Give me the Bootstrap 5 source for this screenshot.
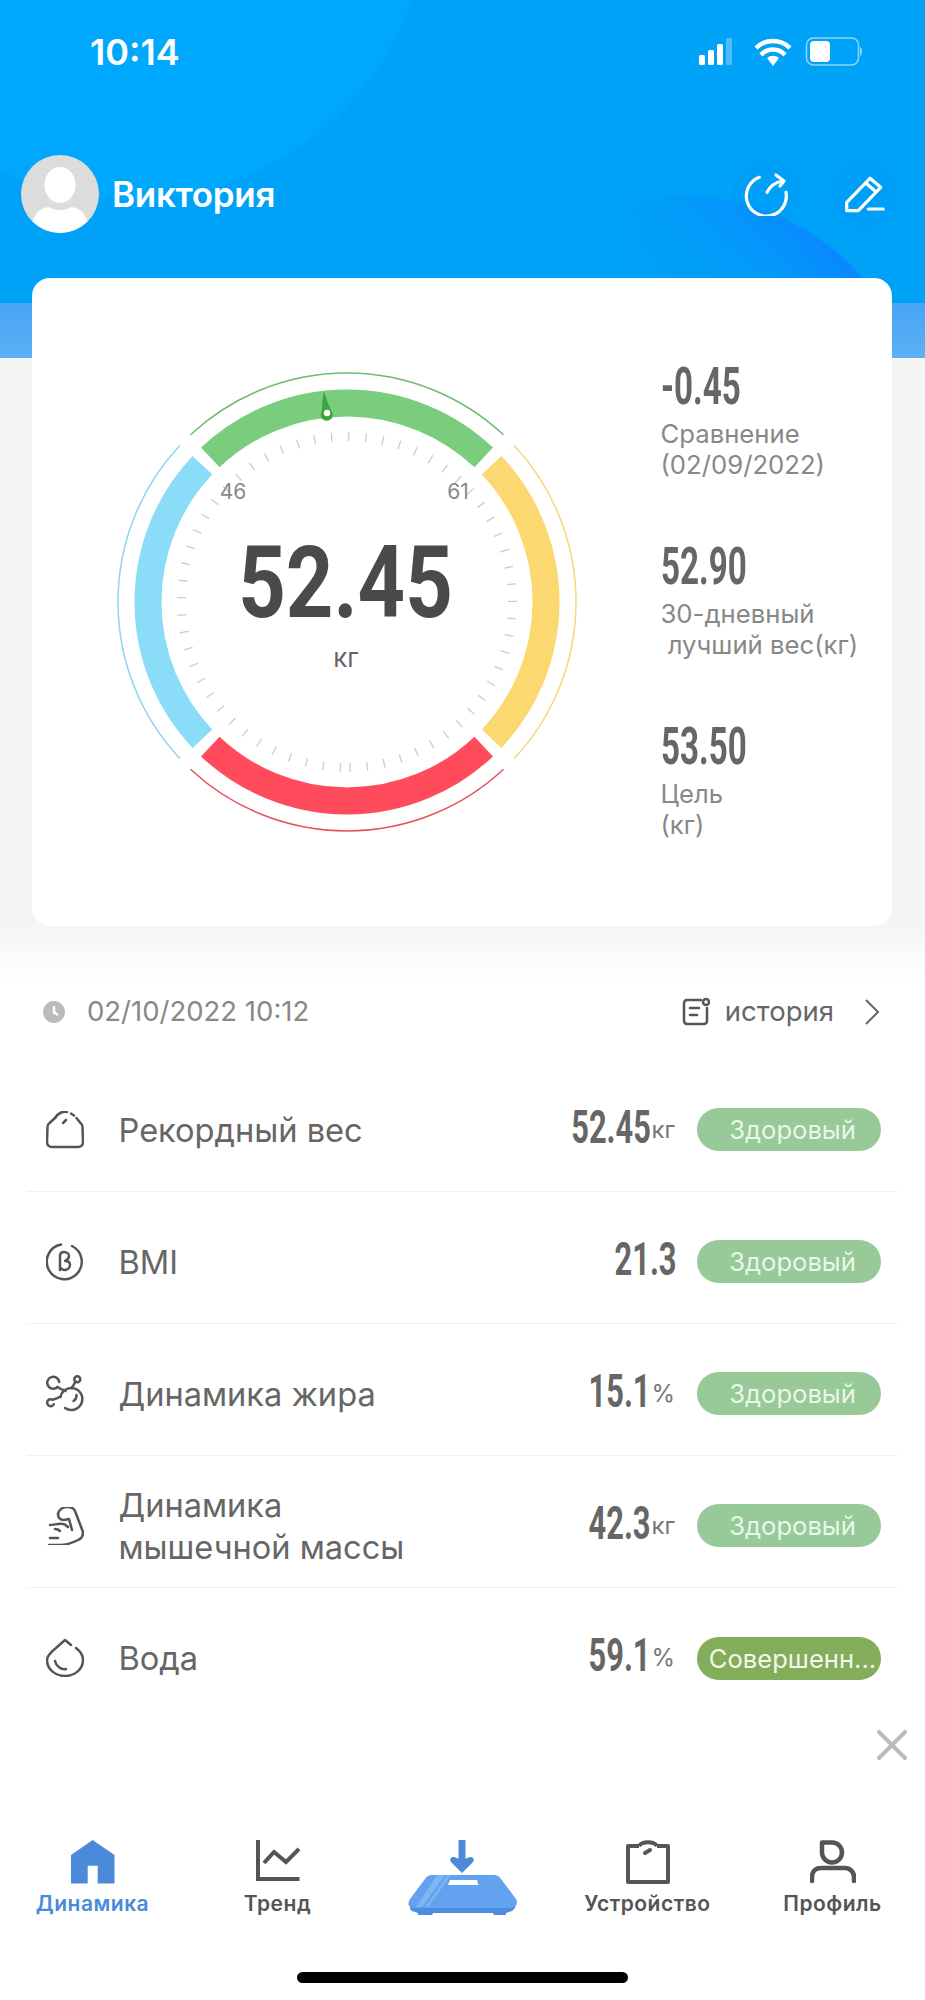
<!DOCTYPE html>
<html lang="ru">
<head>
  <meta charset="UTF-8" />
  <meta name="viewport" content="width=device-width, initial-scale=1" />
  <title>Динамика</title>
  <link href="https://cdn.jsdelivr.net/npm/bootstrap@5.3.0/dist/css/bootstrap.min.css" rel="stylesheet" />
  <style>
    body { background: #fff; font-family: "Inter", "Liberation Sans", sans-serif; color: #666; }
    .app-screen { width: 925px; height: 2000px; overflow: hidden; background: linear-gradient(#f5f5f5 0, #f5f5f5 925px, #fff 985px); }

    /* header */
    .hero { height: 358px; padding-left: 21px; padding-right: 27px; color: #fff; position: relative;
      background:
        radial-gradient(circle 300px at 130px -100px, #00a8fd 99.5%, rgba(0,168,253,0) 100%),
        linear-gradient(#00a2f8 0, #00a2f8 303px, #46a4f6 303px, #5cb0f6 358px); background-repeat: no-repeat; background-size: 100% 303px, 100% 100%; }
    .hero::before { content: ""; position: absolute; left: 0; top: 0; width: 925px; height: 303px;
      background: radial-gradient(circle 240px at 683px 435px, rgba(10,135,255,0) 55%, rgba(10,135,255,.95) 99%, rgba(10,135,255,0) 100%);
      -webkit-mask-image: linear-gradient(to right, transparent 620px, #000 830px); mask-image: linear-gradient(to right, transparent 620px, #000 830px); }
    .status-bar { height: 104px; padding-left: 69px; padding-right: 36px; }
    .status-time { font-size: 36px; font-weight: 600; }
    .profile-row { height: 78px; margin-top: 51px; }
    .avatar-round { width: 78px; height: 78px; border-radius: 50%; background: #dcdcdc; overflow: hidden; }
    .user-name { font-size: 35px; font-weight: 600; margin-left: 13px; letter-spacing: -.3px; }
    .round-btn { width: 68px; height: 68px; border-radius: 50%; background: rgba(0,140,250,.12); }
    .btn-pair { gap: 30px; }

    /* main card */
    .weight-card { width: 860px; height: 648px; margin: -80px 0 0 32px; border-radius: 18px; background: #fff; position: relative; }
    .gauge-box { width: 500px; height: 500px; margin-left: 65px; }
    .gauge-num { fill: #4a4a4a; font-family: "Roboto", sans-serif; font-weight: 700; font-size: 100px; }
    .gauge-unit { fill: #666; font-size: 26px; }
    .gauge-lim { fill: #888; font-size: 21px; }
    .stat-col { width: 232px; margin-left: 63.5px; padding-top: 86px; }
    .stat-item { height: 180px; }
    .stat-num { display: block; height: 45px; font-family: "Liberation Sans Narrow", "Roboto", sans-serif; font-weight: 700; font-size: 51px; line-height: 45px; color: #666; transform: scaleX(.65); transform-origin: left center; white-space: pre; }
    .stat-label { font-size: 25.7px; line-height: 31px; color: #888; margin-top: 9px; white-space: pre; }

    /* list */
    .list-head { height: 97px; padding: 0 45px 0 43px; margin-top: 37px; }
    .date-text { font-size: 27.5px; color: #888; margin-left: 22px; }
    .hist-text { font-size: 27.5px; color: #666; margin: 0 30px 0 15px; }
    .metric-list { margin: 0 28px 0 27px; }
    .metric-row { height: 132px; padding: 8px 16px 0 19px; border-bottom: 1.5px solid #f1f1f1; }
    .metric-row:last-child { border-bottom: 0; }
    .metric-icon { width: 38px; height: 38px; flex: 0 0 38px; margin-right: 34.5px; }
    .metric-name { font-size: 32.6px; line-height: 42px; color: #666; }
    .metric-val { font-family: "Liberation Sans Narrow", "Roboto", sans-serif; font-weight: 700; font-size: 46px; line-height: 46px; color: #666; display: inline-block; transform: translateX(2px) scaleX(.67); transform-origin: right center; margin-top: -6px; }
    .metric-unit { font-size: 24px; color: #777; margin-left: 3px; }
    .state-pill { width: 184px; height: 43px; margin-left: 22px; padding-left: 7px; border-radius: 22px; background: #98c998; color: #e9f6e9; font-size: 25.6px; line-height: 43px; text-align: center; white-space: nowrap; }
    .state-best { background: #83ad5a; color: #f2f8ea; }

    /* tab bar */
    .close-row { height: 30px; margin-top: 10px; padding-right: 18px; }
    .tab-bar { margin-top: 80px; }
    .tab-cell { width: 185px; height: 92px; }
    .tab-ico { height: 44px; }
    .tab-name { font-size: 21px; font-weight: 600; line-height: 26px; margin-top: 7px; color: #555; letter-spacing: .5px; }
    .tab-on { color: #4a8ad8; }
    .home-bar { width: 331px; height: 11px; margin: 40px auto 0; border-radius: 6px; background: #000; }
  </style>
</head>
<body>
  <div class="app-screen">
    <div class="hero">
      <div class="status-bar d-flex align-items-center justify-content-between position-relative">
        <span class="status-time">10:14</span>
        <svg width="163" height="30" viewBox="0 0 163 30">
          <g fill="#fff">
            <rect x="0" y="18" width="6" height="10" rx="1.5"/><rect x="9" y="13" width="6" height="15" rx="1.5"/><rect x="18" y="7" width="6" height="21" rx="1.5"/>
            <rect x="27" y="1" width="6" height="27" rx="1.5" opacity=".3"/>
            <path d="M74 29l-6-8a9 9 0 0 1 12 0z"/>
          </g>
          <g fill="none" stroke="#fff" stroke-width="4.500">
            <path d="M57 11a24 24 0 0 1 34 0"/><path d="M62 18a16 16 0 0 1 24 0"/>
          </g>
          <rect x="107.500" y="1" width="52" height="27" rx="7" fill="none" stroke="#8fd3ff" stroke-width="1.500"/>
          <path d="M161 10c1.500.5 2 2.500 2 4.500s-.5 4-2 4.500z" fill="#8fd3ff"/>
          <rect x="111" y="4" width="20" height="21" rx="4" fill="#fff"/>
        </svg>
      </div>
      <div class="profile-row d-flex align-items-center position-relative">
        <div class="avatar-round flex-shrink-0">
          <svg width="78" height="78" viewBox="0 0 78 78"><ellipse cx="39" cy="30" rx="15.500" ry="18" fill="#fff"/><path d="M10 78c0-15 6-25 18-26 6 4 16 4 22 0 12 1 18 11 18 26z" fill="#fff"/></svg>
        </div>
        <span class="user-name">Виктория</span>
        <div class="d-flex ms-auto btn-pair">
          <div class="round-btn d-flex align-items-center justify-content-center">
            <svg width="44" height="44" viewBox="0 0 44 44" fill="none" stroke="#fff" stroke-width="3.200" stroke-linecap="round" stroke-linejoin="round"><path d="M15.300 5.300A20 20 0 1 0 42 20.300"/><path d="M23 20.300c3-6 8-10 15.700-11.300"/><path d="M32 3l8 6-4 5"/></svg>
          </div>
          <div class="round-btn d-flex align-items-center justify-content-center">
            <svg width="44" height="44" viewBox="0 0 44 44" fill="none" stroke="#fff" stroke-width="3.200" stroke-linejoin="round"><path d="M4.700 38.700V30.300L28 6.300l10.700 9-22.400 23.400z"/><path d="M23.700 11L34 19.700"/><path d="M26.300 37h15" stroke-linecap="round"/></svg>
          </div>
        </div>
      </div>
    </div>

    <div class="weight-card d-flex align-items-center">
      <div class="gauge-box flex-shrink-0">
        <svg id="gauge" width="500" height="500" viewBox="0 0 500 500"></svg>
      </div>
      <div class="stat-col align-self-start">
        <div class="stat-item"><span class="stat-num">-0.45</span><div class="stat-label">Сравнение
(02/09/2022)</div></div>
        <div class="stat-item"><span class="stat-num">52.90</span><div class="stat-label">30-дневный
 лучший вес(кг)</div></div>
        <div class="stat-item"><span class="stat-num">53.50</span><div class="stat-label">Цель
(кг)</div></div>
      </div>
    </div>

    <div class="list-head d-flex align-items-center">
      <svg width="22" height="22" viewBox="0 0 22 22"><circle cx="11" cy="11" r="11" fill="#bbb"/><path d="M11 5v6.500l4 2.500" fill="none" stroke="#fff" stroke-width="2.500"/></svg>
      <span class="date-text">02/10/2022 10:12</span>
      <div class="d-flex align-items-center ms-auto">
        <svg width="28" height="29" viewBox="0 0 28 29" fill="none" stroke="#555" stroke-width="2.500" stroke-linecap="round"><path d="M19 3H5a3 3 0 0 0-3 3v18a3 3 0 0 0 3 3h17a3 3 0 0 0 3-3V11"/><circle cx="24" cy="5" r="3"/><path d="M8 11h9M8 18h7"/></svg>
        <span class="hist-text">история</span>
        <svg width="16" height="26" viewBox="0 0 16 26" fill="none" stroke="#666" stroke-width="2"><path d="M2 1l12 12L2 25"/></svg>
      </div>
    </div>

    <div class="metric-list">
      <div class="metric-row d-flex align-items-center">
        <svg class="metric-icon" viewBox="0 0 38 38" fill="none" stroke="#555" stroke-width="2.500" stroke-linecap="round" stroke-linejoin="round"><path d="M9 7L3.500 12c-1.500 1-2 2-2 4l-.5 15c0 3 2 5 5 5h26c3 0 5-2 5-5l-.5-15c0-2-.5-3-2-4l-4-5"/><path d="M9 7c3-5 8-7 12-6"/><path d="M25 2.500l3 2"/><path d="M17 12l3-3"/></svg>
        <span class="metric-name">Рекордный вес</span>
        <div class="d-flex align-items-center ms-auto"><span class="metric-val">52.45</span><span class="metric-unit">кг</span></div>
        <div class="state-pill">Здоровый</div>
      </div>
      <div class="metric-row d-flex align-items-center">
        <svg class="metric-icon" viewBox="0 0 38 38" fill="none" stroke="#555" stroke-width="2.500" stroke-linecap="round" stroke-linejoin="round"><path d="M15 1.500a17.500 17.500 0 1 0 11 1.500"/><path d="M14 27V13c0-3 2-4 4-4 3 0 5 2 5 4s-2 4-4 5c4 0 5 2 5 4 0 3-3 5-5 5-2 0-4-1-5-3"/></svg>
        <span class="metric-name">BMI</span>
        <div class="d-flex align-items-center ms-auto"><span class="metric-val">21.3</span></div>
        <div class="state-pill">Здоровый</div>
      </div>
      <div class="metric-row d-flex align-items-center">
        <svg class="metric-icon" viewBox="0 0 38 38" fill="none" stroke="#555" stroke-width="2.500" stroke-linecap="round" stroke-linejoin="round"><path d="M19 33a11 11 0 1 0-4.500-11"/><path d="M11.500 12A6 6 0 1 1 13.200 7"/><path d="M11.500 12c3 2 5 3 8 4"/><path d="M29 7.500c-1 2-2 4-3.500 5.500"/><circle cx="31.300" cy="4.300" r="3"/><path d="M7.800 29.300A3.500 3.500 0 1 1 6.500 24.700C9.500 24 12 23 14.500 21.500"/><path d="M27.500 26c2-1 3-3 3-6"/></svg>
        <span class="metric-name">Динамика жира</span>
        <div class="d-flex align-items-center ms-auto"><span class="metric-val">15.1</span><span class="metric-unit">%</span></div>
        <div class="state-pill">Здоровый</div>
      </div>
      <div class="metric-row d-flex align-items-center">
        <svg class="metric-icon" viewBox="0 0 38 38" fill="none" stroke="#555" stroke-width="2.500" stroke-linecap="round" stroke-linejoin="round"><path d="M12 7c1-5 6-7 10-7 4 0 6 2 7 4l8 21c0 4-2 7-5 8-6 3-12 5-18 5H3"/><path d="M12 7c0 4 2 6 6 6l5-1 3 11"/><path d="M4 18c4 0 9-2 13-1 2 0 4 2 5 3"/><path d="M9 22c2 0 4 1 5 2"/><path d="M4 31h8"/></svg>
        <span class="metric-name">Динамика<br />мышечной массы</span>
        <div class="d-flex align-items-center ms-auto"><span class="metric-val">42.3</span><span class="metric-unit">кг</span></div>
        <div class="state-pill">Здоровый</div>
      </div>
      <div class="metric-row d-flex align-items-center">
        <svg class="metric-icon" viewBox="0 0 38 38" fill="none" stroke="#555" stroke-width="2.500" stroke-linecap="round" stroke-linejoin="round"><path d="M25 6l-6-5-9 8C5 13 1 17 1 21a18 16 0 0 0 36 0c0-5-3-9-7-12"/><path d="M9 22c1 5 6 9 11 8"/></svg>
        <span class="metric-name">Вода</span>
        <div class="d-flex align-items-center ms-auto"><span class="metric-val">59.1</span><span class="metric-unit">%</span></div>
        <div class="state-pill state-best">Совершенн...</div>
      </div>
    </div>

    <div class="close-row d-flex justify-content-end">
      <svg width="30" height="30" viewBox="0 0 30 30" stroke="#bbb" stroke-width="4" stroke-linecap="round"><path d="M2 2l26 26M28 2L2 28"/></svg>
    </div>

    <div class="tab-bar d-flex">
      <div class="tab-cell text-center">
        <div class="tab-ico"><svg width="44" height="44" viewBox="0 0 44 44"><path d="M21.700 0L43.500 15V43.500H26.700V25.700H16.700V43.500H0V15z" fill="#4a8ad8"/></svg></div>
        <div class="tab-name tab-on">Динамика</div>
      </div>
      <div class="tab-cell text-center">
        <div class="tab-ico"><svg width="44" height="44" viewBox="0 0 44 44" fill="none" stroke="#555" stroke-width="4"><path d="M2 0V39H43.500"/><path d="M8 23l10-11 12 10 13-13"/></svg></div>
        <div class="tab-name">Тренд</div>
      </div>
      <div class="tab-cell text-center">
        <div class="tab-ico"><svg width="110" height="76" viewBox="0 0 110 76"><path d="M54 1v17" stroke="#4a8ad8" stroke-width="7" stroke-linecap="round"/><path d="M54 33L43 22c-2-3 0-5 3-5l8 3 8-3c3 0 5 2 3 5z" fill="#4a8ad8"/><path d="M3 64c2 2 4 3 7 3h90c3 0 5-1 7-3 1 3 0 5-3 7l-6 2v2H86l-1-2H25l-1 2H10v-2l-6-2c-3-2-2-5-1-7z" fill="#4d8de0"/><path d="M24 35h62c3 0 5 1 7 4l15 20c2 3 1 6-2 8l-2 1H5l-3-1c-2-2-2-5 0-8l15-20c2-3 4-4 7-4z" fill="#62a2ee"/><path d="M29 35h8L14 67H8z" fill="#7fb5f2"/><path d="M40 35h3L20 67h-3z" fill="#7fb5f2"/><path d="M42 40h27l1.500 5H40z" fill="#fff"/></svg></div>
      </div>
      <div class="tab-cell text-center">
        <div class="tab-ico"><svg width="44" height="44" viewBox="0 0 44 44" fill="none" stroke="#555" stroke-width="4" stroke-linejoin="round"><path d="M13 6H2v36h40V6H31"/><path d="M13 6c3-5 15-5 18 0"/><path d="M19 13l5-3" stroke-linecap="round"/></svg></div>
        <div class="tab-name">Устройство</div>
      </div>
      <div class="tab-cell text-center">
        <div class="tab-ico"><svg width="46" height="44" viewBox="0 0 46 44" fill="none" stroke="#555" stroke-width="4.500" stroke-linecap="round"><path d="M12 2.500H23a10 10 0 1 1-11 10z" stroke-linejoin="round"/><path d="M2 41v-4c0-5 3-9 9-9h24c5 0 9 4 9 9v4"/></svg></div>
        <div class="tab-name">Профиль</div>
      </div>
    </div>
    <div class="home-bar"></div>
  </div>

  <script src="https://cdn.jsdelivr.net/npm/bootstrap@5.3.0/dist/js/bootstrap.bundle.min.js"></script>
  <script>
    // gauge is drawn from data: centre 250,250 in the box
    const cx = 250, cy = 250;
    const pt = (r, deg) => {
      const a = deg * Math.PI / 180;
      return [cx + r * Math.sin(a), cy - r * Math.cos(a)];
    };
    const arc = (r, from, to) => {
      const [x1, y1] = pt(r, from), [x2, y2] = pt(r, to);
      return `M${x1.toFixed(2)} ${y1.toFixed(2)}A${r} ${r} 0 0 1 ${x2.toFixed(2)} ${y2.toFixed(2)}`;
    };
    const parts = [
      { from: -43.4, to: 43.4, color: "#7acd7c", thin: "#6dbb70" },
      { from: 46.6, to: 133.4, color: "#fcd970", thin: "#f5d877" },
      { from: 136.6, to: 223.4, color: "#ff4b5c", thin: "#e8525f" },
      { from: 226.6, to: 313.4, color: "#8adcf8", thin: "#8bd6ee" }
    ];
    let svg = "";
    parts.forEach(p => {
      svg += `<path d="${arc(199, p.from, p.to)}" fill="none" stroke="${p.color}" stroke-width="27"/>`;
      svg += `<path d="${arc(229, p.from + 0.3, p.to - 0.3)}" fill="none" stroke="${p.thin}" stroke-width="1.5"/>`;
    });
    // ticks, with the seam at the bottom as in the app
    for (let i = 0; i <= 60; i++) {
      const deg = -177.7 + i * 5.944;
      const [x1, y1] = pt(161, deg), [x2, y2] = pt(170, deg);
      svg += `<line x1="${x1.toFixed(2)}" y1="${y1.toFixed(2)}" x2="${x2.toFixed(2)}" y2="${y2.toFixed(2)}" stroke="#ccc" stroke-width="1.3"/>`;
    }
    svg += `<path d="M224.500 60c1-8 1-15 2.500-21 2 6 4 13 8.500 22a6 6 0 1 1-11-1z" fill="#3ba63f"/><circle cx="230" cy="61" r="3.200" fill="#fff"/>`;
    svg += `<text class="gauge-lim" x="136" y="147" text-anchor="middle">46</text>`;
    svg += `<text class="gauge-lim" x="361" y="147" text-anchor="middle">61</text>`;
    svg += `<text class="gauge-num" x="248.500" y="265" text-anchor="middle" transform="translate(248.500 0) scale(.83 1) translate(-248.500 0)">52.45</text>`;
    svg += `<text class="gauge-unit" x="249" y="315" text-anchor="middle">кг</text>`;
    document.getElementById("gauge").innerHTML = svg;
  </script>
</body>
</html>
